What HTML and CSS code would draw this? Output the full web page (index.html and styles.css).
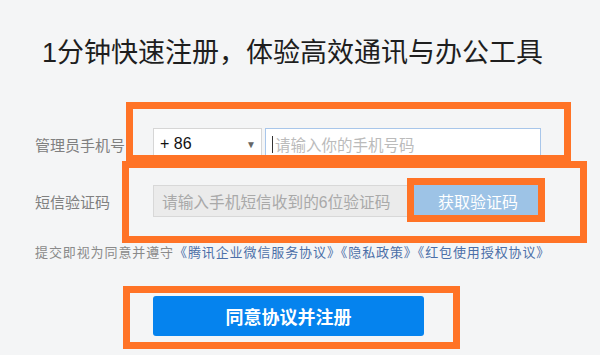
FILE: index.html
```html
<!DOCTYPE html>
<html lang="zh-CN">
<head>
<meta charset="utf-8">
<title>注册</title>
<link rel="stylesheet" href="styles.css">
</head>
<body>
<div class="page">
  <h1 class="title">1分钟快速注册，体验高效通讯与办公工具</h1>
  <div class="form">
    <div class="row row-phone">
      <label class="label">管理员手机号</label>
      <div class="select"><span class="select-val">+ 86</span><span class="arrow">▼</span></div>
      <div class="field field-focus"><span class="caret"></span><span class="ph">请输入你的手机号码</span></div>
    </div>
    <div class="row row-code">
      <label class="label">短信验证码</label>
      <div class="field field-disabled"><span class="ph">请输入手机短信收到的6位验证码</span></div>
      <button class="btn-code" type="button">获取验证码</button>
    </div>
    <p class="agree">提交即视为同意并遵守<a href="#">《腾讯企业微信服务协议》</a><a href="#">《隐私政策》</a><a href="#">《红包使用授权协议》</a></p>
    <div class="submit-row">
      <button class="btn-submit" type="button">同意协议并注册</button>
    </div>
  </div>
  <div class="mark mark-1"></div>
  <div class="mark mark-2"></div>
  <div class="mark mark-3"></div>
  <div class="mark mark-4"></div>
</div>
</body>
</html>
```
FILE: styles.css
```css
* { box-sizing: border-box; }
html, body {
  margin: 0;
  padding: 0;
  background: #f4f5f6;
}
body {
  font-family: "Liberation Sans", "Noto Sans CJK SC", sans-serif;
  color: #222;
}
.page {
  position: relative;
  width: 600px;
  height: 355px;
  overflow: hidden;
}
.title {
  margin: 0;
  padding: 35px 0 0 42px;
  font-size: 27px;
  line-height: 36px;
  font-weight: normal;
  color: #1e1e1e;
  white-space: nowrap;
}
.form {
  padding-left: 35px;
}
.row {
  display: flex;
  align-items: center;
  height: 32px;
}
.row-phone { margin-top: 57px; }
.row-code { margin-top: 25px; }
.label {
  width: 118px;
  font-size: 15px;
  color: #808080;
  white-space: nowrap;
}
.select {
  width: 109px;
  height: 32px;
  background: #fff;
  border: 1px solid #d6d6d6;
  display: flex;
  align-items: center;
  justify-content: space-between;
  padding: 0 5px 0 6px;
  font-size: 16px;
  color: #111;
}
.arrow {
  font-size: 10px;
  color: #666;
}
.field {
  height: 32px;
  display: flex;
  align-items: center;
  padding-left: 6px;
  font-size: 15.5px;
  border: 1px solid #d6d6d6;
  background: #fff;
}
.field-focus {
  width: 276px;
  margin-left: 3px;
  border-color: #a8c6ea;
}
.caret {
  width: 1px;
  height: 17px;
  background: #333;
  margin-right: 2px;
}
.ph {
  color: #bbbbbb;
  white-space: nowrap;
}
.field-disabled {
  width: 256px;
  background: #ebebeb;
  border-color: #d8d8d8;
  padding-left: 8px;
  font-size: 15.7px;
}
.field-disabled .ph { color: #a9a9a9; }
.btn-code {
  width: 128px;
  height: 32px;
  margin-left: 4px;
  border: 0;
  background: #9dc3e6;
  color: #fff;
  font-family: "Noto Sans CJK SC", sans-serif;
  font-size: 16px;
  padding: 0 0 0 3px;
  text-align: left;
  text-indent: 22px;
}
.agree {
  margin: 27px 0 0 0;
  font-size: 13px;
  line-height: 18px;
  color: #8a8a8a;
  white-space: nowrap;
  letter-spacing: 0.9px;
}
.agree a {
  color: #4b6fa8;
  text-decoration: none;
}
.submit-row {
  margin-top: 34px;
  padding-left: 118px;
}
.btn-submit {
  width: 271px;
  height: 40px;
  border: 0;
  border-radius: 3px;
  background: #0583ee;
  color: #fff;
  font-family: "Noto Sans CJK SC", sans-serif;
  font-size: 18px;
  font-weight: bold;
  padding: 0;
}
.mark {
  position: absolute;
  border: 7px solid #ff7326;
}
.mark-1 { left: 126px; top: 102px; width: 445px; height: 60px; }
.mark-2 { left: 122px; top: 161px; width: 465px; height: 82px; }
.mark-3 { left: 407px; top: 178px; width: 138px; height: 44px; }
.mark-4 { left: 123px; top: 286px; width: 337px; height: 63px; }
```
